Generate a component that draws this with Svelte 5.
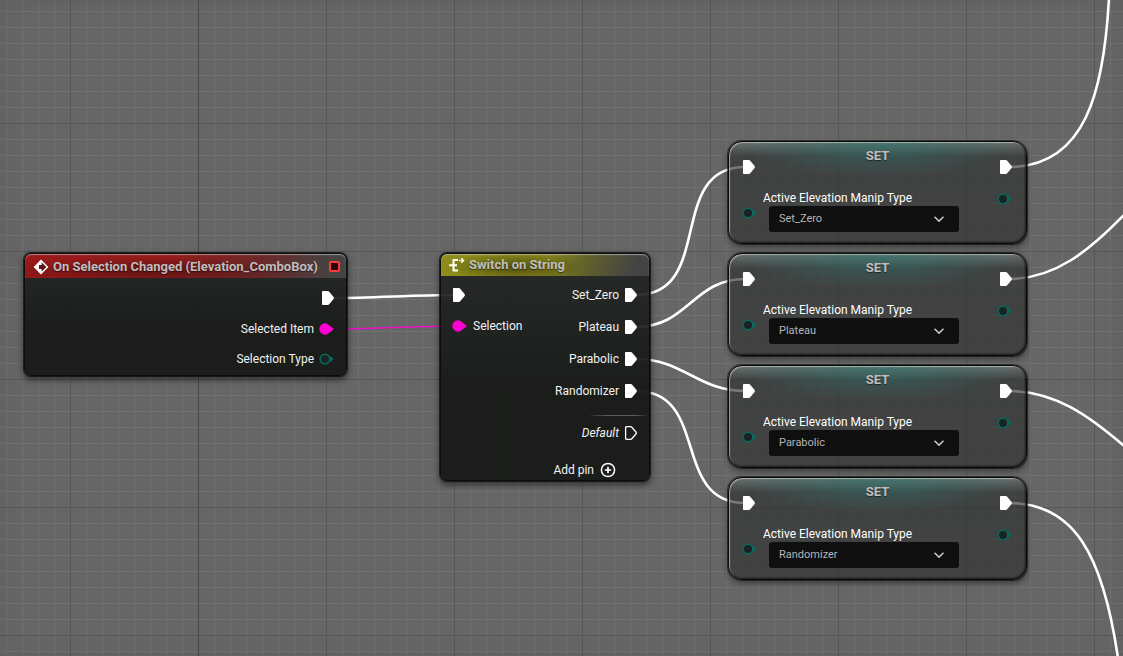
<script>
  const types = ['Set_Zero', 'Plateau', 'Parabolic', 'Randomizer'];
  const setNodes = types.map((value, i) => ({ value, x: 727, y: 140 + i * 112 }));

  // Horizontal-tangent spline between two pins.
  function spline(x1, y1, x2, y2) {
    const c = Math.round((Math.abs(x2 - x1) + Math.abs(y2 - y1)) / 3);
    return `M${x1} ${y1}C${x1 + c} ${y1} ${x2 - c} ${y2} ${x2} ${y2}`;
  }

  const wires = [
    spline(332, 298, 455, 295),
    ...types.map((_, i) => spline(636, 295 + i * 32, 745, 167 + i * 112)),
    'M1009 167C1086 167 1104 90 1109 -2',
    'M1009 279C1055 279 1090 250 1123 216L1200 136',
    'M1009 391C1055 391 1089 416 1123 445L1200 520',
    'M1009 503C1075 503 1103 556 1118 658'
  ];
</script>

{#snippet execPin(hollow)}
  <svg class="pin" width="14" height="16" viewBox="0 0 14 16" aria-hidden="true">
    {#if hollow}
      <path d="M2.4 1.7h4.2q.7 0 1.2.6l4.3 4.9q.6.8 0 1.6l-4.3 4.9q-.5.6-1.2.6H2.4q-.8 0-.8-.8V2.5q0-.8.8-.8z" fill="none" stroke="#fff" stroke-width="1.3" />
    {:else}
      <path d="M1.8 1h5q.8 0 1.4.7l4.4 5.4q.7.9 0 1.8l-4.4 5.4q-.6.7-1.4.7h-5q-.8 0-.8-.8V1.8q0-.8.8-.8z" fill="#fff" />
    {/if}
  </svg>
{/snippet}

{#snippet dataPin(color, filled)}
  <svg class="pin" width="16" height="16" viewBox="0 0 16 16" aria-hidden="true">
    <path d="M11 4.8L14.8 8 11 11.2z" fill={color} />
    {#if filled}
      <circle cx="6" cy="8" r="5.7" fill={color} />
    {:else}
      <circle cx="6" cy="8" r="4.8" fill="#1c2221" stroke={color} stroke-width="1.6" />
    {/if}
  </svg>
{/snippet}

<main class="graph">
  <svg class="wires" width="100%" height="100%" fill="none" aria-hidden="true">
    {#each wires as d}
      <path {d} stroke="#fff" stroke-width="2.6" />
    {/each}
    <path d="M330 329C372 329 415 326 457 326" stroke="#f00fc8" stroke-width="1.6" />
  </svg>

  <section class="node event">
    <header class="bar red">
      <svg width="16" height="16" viewBox="0 0 16 16" aria-hidden="true">
        <path d="M8 .6L15.4 8 8 15.4.6 8z" fill="#fff" />
        <path d="M8.6 3.2L13.4 8l-4.8 4.8V10H6V6h2.6z" fill="#5c1515" />
      </svg>
      <h2>On Selection Changed (Elevation_ComboBox)</h2>
      <svg class="delegate" width="12" height="12" viewBox="0 0 12 12" aria-hidden="true">
        <rect x="1" y="1" width="9" height="9" rx="1" fill="#250505" stroke="#ff3838" stroke-width="2" />
      </svg>
    </header>
    <div class="column outputs event-pins">
      <div class="row tall">{@render execPin(false)}</div>
      <div class="row"><span>Selected Item</span>{@render dataPin('#ff00d2', true)}</div>
      <div class="row"><span>Selection Type</span>{@render dataPin('#08695c', false)}</div>
    </div>
  </section>

  <section class="node switch">
    <header class="bar yellow">
      <svg width="16" height="16" viewBox="0 0 16 16" aria-hidden="true">
        <path d="M9 3H4.5v10.4H9M0 8.2h8" fill="none" stroke="#fff" stroke-width="2" />
        <path d="M10 3.5h1.4M12 3.5h3M12.4 1.2l2.3 2.3-2.3 2.3" fill="none" stroke="#fff" stroke-width="1.3" />
      </svg>
      <h2>Switch on String</h2>
    </header>
    <div class="pins">
      <div class="column inputs">
        <div class="row tall">{@render execPin(false)}</div>
        <div class="row">{@render dataPin('#ff00d2', true)}<span>Selection</span></div>
      </div>
      <div class="column outputs">
        {#each types as type}
          <div class="row tall"><span>{type}</span>{@render execPin(false)}</div>
        {/each}
      </div>
    </div>
    <hr />
    <div class="column outputs">
      <div class="row tall"><em>Default</em>{@render execPin(true)}</div>
    </div>
    <button class="add" type="button">
      Add pin
      <svg width="16" height="16" viewBox="0 0 16 16" fill="none" stroke="#fff" aria-hidden="true">
        <circle cx="8" cy="8" r="6.6" stroke-width="1.5" />
        <path d="M8 4.8v6.4M4.8 8h6.4" stroke-width="1.7" />
      </svg>
    </button>
  </section>

  {#each setNodes as node, i}
    <section class="node set" style="left: {node.x}px; top: {node.y}px">
      <h2>SET</h2>
      <div class="side left">
        {@render execPin(false)}
        {@render dataPin('#08695c', false)}
      </div>
      <div class="field">
        <label for="type-{i}">Active Elevation Manip Type</label>
        <div class="combo">
          <select id="type-{i}" value={node.value}>
            {#each types as type}
              <option value={type}>{type}</option>
            {/each}
          </select>
          <svg width="12" height="8" viewBox="0 0 12 8" aria-hidden="true">
            <path d="M1.5 1.7L6 6.1l4.5-4.4" fill="none" stroke="#c8c8c8" stroke-width="1.5" />
          </svg>
        </div>
      </div>
      <div class="side right">
        {@render execPin(false)}
        {@render dataPin('#08695c', false)}
      </div>
    </section>
  {/each}
</main>

<style>
  :global(body) {
    margin: 0;
    background: #666;
  }

  .graph {
    position: relative;
    height: 100vh;
    overflow: hidden;
    color: #f2f2f2;
    font: 12px/16px Roboto, sans-serif;
    background:
      linear-gradient(#484848, #484848) 198px 0 / 1px 100% no-repeat,
      linear-gradient(90deg, #585858 1px, transparent 1px) 70px 0 / 128px 128px,
      linear-gradient(#585858 1px, transparent 1px) 0 123px / 128px 128px,
      linear-gradient(90deg, #707070 1px, transparent 1px) 6px 0 / 16px 16px,
      linear-gradient(#707070 1px, transparent 1px) 0 11px / 16px 16px,
      #666;
  }

  .graph::before {
    content: '';
    position: absolute;
    inset: 0;
    box-shadow: inset 0 0 24px rgba(0, 0, 0, 0.08);
  }

  .wires {
    position: absolute;
    inset: 0;
  }

  .node {
    position: absolute;
    box-sizing: border-box;
    border: 1px solid #0c0c0c;
    border-radius: 7px;
    box-shadow: 0 0 0 1px rgba(10, 10, 10, 0.7), 0 3px 6px 1px rgba(0, 0, 0, 0.5);
  }

  .event,
  .switch {
    background: linear-gradient(rgba(33, 36, 34, 0.9), rgba(24, 26, 24, 0.96) 60%);
  }

  .event {
    left: 24px;
    top: 253px;
    width: 323px;
    height: 123px;
  }

  .switch {
    left: 440px;
    top: 253px;
    width: 210px;
    height: 228px;
  }

  h2 {
    margin: 0;
    color: #c1bdbd;
    font-size: 13px;
    font-weight: 700;
    line-height: 16px;
    text-shadow: 0 1px 1px rgba(0, 0, 0, 0.5);
    white-space: nowrap;
  }

  .bar {
    display: flex;
    align-items: center;
    gap: 4px;
    box-sizing: border-box;
    padding: 0 5px 0 8px;
    border-radius: 6px 6px 0 0;
    box-shadow: inset 0 1px 1px rgba(210, 210, 210, 0.6);
  }

  .red {
    height: 24px;
    padding-top: 2px;
    background:
      radial-gradient(ellipse 160px 14px at 40% 70%, rgba(60, 14, 14, 0.6), transparent),
      linear-gradient(90deg, #991919, #961c1c 45%, #6e2828 72%, #444 97%);
  }

  .yellow {
    height: 22px;
    background:
      radial-gradient(ellipse 70px 14px at 35% 60%, rgba(50, 50, 5, 0.65), transparent),
      linear-gradient(110deg, #8e8e1c, #85851c 50%, #5c5c2e 72%, #444 92%);
  }

  .delegate {
    margin-left: auto;
  }

  .pins {
    display: flex;
    justify-content: space-between;
    padding-top: 3px;
  }

  .column {
    display: flex;
    flex-direction: column;
  }

  .event-pins {
    padding-top: 4px;
  }

  .outputs {
    align-items: flex-end;
    padding-right: 11px;
  }

  .inputs {
    padding-left: 11px;
  }

  .row {
    display: flex;
    align-items: center;
    gap: 5px;
    height: 30px;
  }

  .tall {
    height: 32px;
  }

  .pin {
    display: block;
    flex: none;
  }

  hr {
    width: 60px;
    height: 1px;
    margin: 8px 1px 1px auto;
    border: 0;
    background: linear-gradient(90deg, transparent, #5a5a5a 30%, #5a5a5a 80%, transparent);
  }

  .add {
    display: flex;
    align-items: center;
    gap: 6px;
    margin: 13px 33px 0 auto;
    padding: 0;
    border: 0;
    background: none;
    color: inherit;
    font: inherit;
  }

  .set {
    display: grid;
    grid-template-columns: 21px 1fr 16px;
    align-content: start;
    width: 299px;
    height: 103px;
    margin: 1px;
    padding: 0 13px;
    border-radius: 14px;
    background:
      radial-gradient(ellipse 140px 36px at 50% 0, rgba(40, 120, 112, 0.55), transparent),
      linear-gradient(rgba(140, 155, 152, 0.5), transparent 14px),
      linear-gradient(rgba(42, 46, 45, 0.64), rgba(44, 44, 44, 0.64));
    box-shadow:
      inset 1px 1px 1px rgba(225, 225, 225, 0.6),
      inset -1px -1px 2px rgba(0, 0, 0, 0.6),
      0 0 0 1px rgba(10, 10, 10, 0.6),
      0 3px 6px rgba(0, 0, 0, 0.45);
  }

  .set h2 {
    grid-column: 1 / -1;
    height: 11px;
    padding-top: 6px;
    text-align: center;
  }

  .side {
    display: flex;
    flex-direction: column;
  }

  .left {
    gap: 30px;
  }

  .right {
    align-items: flex-end;
    gap: 16px;
  }

  .field {
    display: flex;
    flex-direction: column;
    padding-top: 31px;
  }

  label {
    color: #fff;
  }

  .combo {
    display: flex;
    align-items: center;
    width: 190px;
    margin-left: 6px;
  }

  select {
    appearance: none;
    width: 100%;
    height: 26px;
    padding: 0 32px 0 10px;
    border: 0;
    border-radius: 3px;
    background: #0f0f0f;
    color: #b4b4b4;
    font: 11px/16px Roboto, sans-serif;
  }

  .combo svg {
    flex: none;
    margin-left: -26px;
    pointer-events: none;
  }
</style>
